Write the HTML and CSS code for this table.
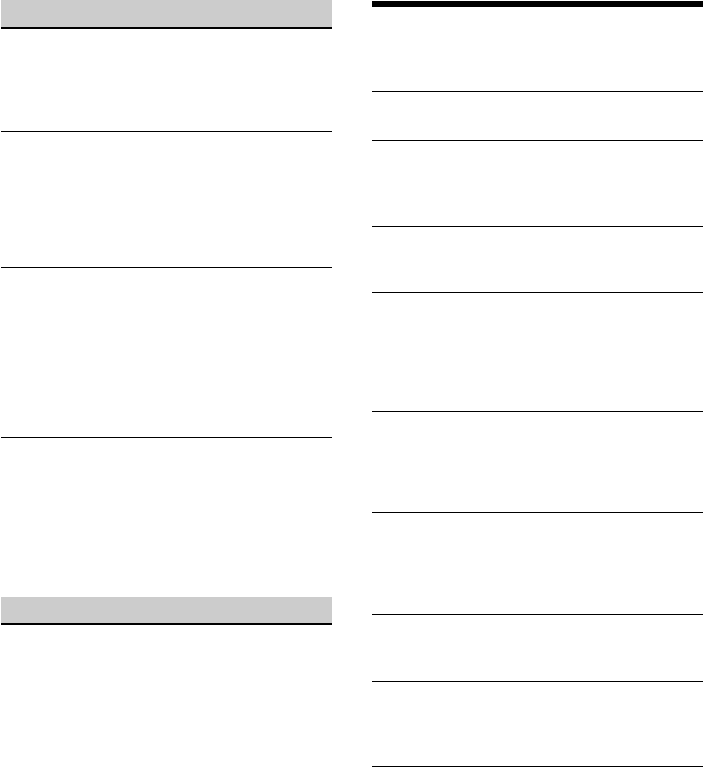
FILE: index.html
```html
<!DOCTYPE html>
<html>
<head>
<meta charset="utf-8">
<link rel="stylesheet" href="styles.css">
</head>
<body>
<div class="page">
  <div class="col left">
    <div class="band band-1"></div>
    <div class="row l1"></div>
    <div class="row l2"></div>
    <div class="row l3"></div>
    <div class="spacer"></div>
    <div class="band band-2"></div>
  </div>
  <div class="col right">
    <div class="topbar"></div>
    <div class="row r1"></div>
    <div class="row r2"></div>
    <div class="row r3"></div>
    <div class="row r4"></div>
    <div class="row r5"></div>
    <div class="row r6"></div>
    <div class="row r7"></div>
    <div class="row r8"></div>
    <div class="row r9"></div>
  </div>
</div>
</body>
</html>
```
FILE: styles.css
```css
* { box-sizing: border-box; }
html, body { margin: 0; padding: 0; background: #fff; }
body { font-family: "Liberation Serif", serif; }
.page {
  display: flex;
  gap: 40px;
  padding-left: 1px;
  width: 704px;
}
.col { width: 331px; display: flex; flex-direction: column; }
.band { background: #cccccc; border-bottom: 2px solid #000; }
.band-1 { height: 29px; }
.band-2 { height: 28px; }
.row { border-bottom: 1px solid #000; }
.l1 { height: 103px; }
.l2 { height: 136px; }
.l3 { height: 170px; }
.spacer { height: 159px; }
.right { padding-top: 1px; }
.topbar { height: 6px; background: #000; }
.r1 { height: 85px; }
.r2 { height: 49px; }
.r3 { height: 86px; }
.r4 { height: 66px; }
.r5 { height: 119px; }
.r6 { height: 101px; }
.r7 { height: 102px; }
.r8 { height: 67px; }
.r9 { height: 85px; }
```
